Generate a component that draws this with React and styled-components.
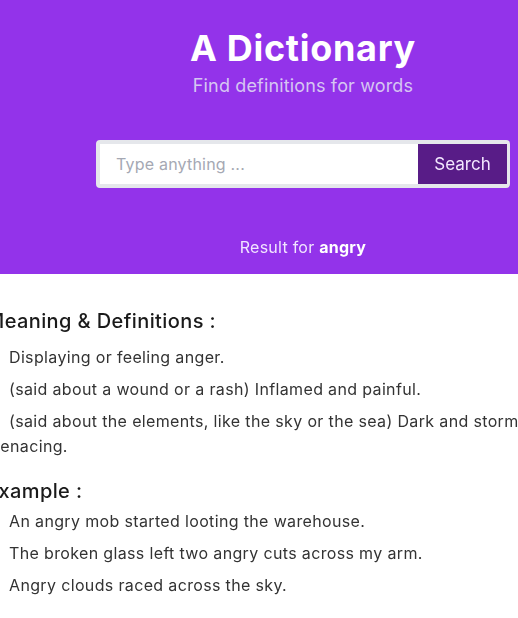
import React from 'react'
import styled, { createGlobalStyle } from 'styled-components'

const GlobalStyle = createGlobalStyle`
  body {
    margin: 0;
    overflow: hidden;
    font-family: "Inter", "Liberation Sans", sans-serif;
    background: #fff;
  }
`

const meanings = [
  'Displaying or feeling anger.',
  '(said about a wound or a rash) Inflamed and painful.',
  '(said about the elements, like the sky or the sea) Dark and stormy, menacing.',
]

const examples = [
  'An angry mob started looting the warehouse.',
  'The broken glass left two angry cuts across my arm.',
  'Angry clouds raced across the sky.',
]

function App() {
  return (
    <>
      <GlobalStyle />
      <Header>
        <Title>A Dictionary</Title>
        <Subtitle>Find definitions for words</Subtitle>
        <SearchForm onSubmit={(e) => e.preventDefault()}>
          <SearchInput placeholder="Type anything ..." autoFocus />
          <SearchButton type="submit">Search</SearchButton>
        </SearchForm>
        <ResultFor>
          Result for <b>angry</b>
        </ResultFor>
      </Header>
      <Results>
        <SectionTitle>Meaning &amp; Definitions :</SectionTitle>
        <List $top="9px">
          {meanings.map((m) => (
            <Item key={m}>{m}</Item>
          ))}
        </List>
        <SectionTitle $gap>Example :</SectionTitle>
        <List $top="3px">
          {examples.map((m) => (
            <Item key={m}>{m}</Item>
          ))}
        </List>
      </Results>
    </>
  )
}

export default App

const Header = styled.header`
  background-color: #9333ea;
  height: 274px;
  box-sizing: border-box;
  padding: 26px 0 0 88px;
  display: flex;
  flex-direction: column;
  align-items: center;
`

const Title = styled.h1`
  margin: 0;
  color: #fff;
  font-size: 36px;
  line-height: 44px;
  font-weight: 700;
  letter-spacing: 0.7px;
`

const Subtitle = styled.p`
  margin: 3px 0 0;
  color: #d6c6f2;
  font-size: 18px;
  line-height: 26px;
  letter-spacing: 0.15px;
`

const SearchForm = styled.form`
  margin-top: 41px;
  width: 414px;
  height: 48px;
  box-sizing: border-box;
  border: 4px solid #e5e7eb;
  border-right-width: 3px;
  border-radius: 4px;
  display: flex;
  background: #fff;
`

const SearchInput = styled.input`
  flex: 1;
  min-width: 0;
  border: none;
  outline: none;
  padding: 0 16px;
  font-family: inherit;
  font-size: 16px;
  letter-spacing: 0.2px;
  color: #333;
  caret-color: #111;
  &::placeholder {
    color: #a5a8b3;
  }
`

const SearchButton = styled.button`
  width: 89px;
  border: none;
  background-color: #581c87;
  color: #f3e8ff;
  font-family: inherit;
  font-size: 17px;
  padding: 0;
`

const ResultFor = styled.p`
  margin: 47px 0 0;
  color: #f1e4ff;
  font-size: 16px;
  line-height: 24px;
  letter-spacing: 0.25px;
  b {
    color: #fff;
    font-weight: 700;
  }
`

const Results = styled.main`
  margin-left: -14px;
  width: 560px;
  padding-top: 32px;
`

const SectionTitle = styled.h2`
  margin: ${(p) => (p.$gap ? '17px' : '0')} 0 0;
  color: #1a1a1a;
  font-size: 20px;
  line-height: 30px;
  font-weight: 500;
  letter-spacing: 0.4px;
`

const List = styled.ul`
  list-style: none;
  margin: ${(p) => p.$top} 0 0;
  padding: 0;
`

const Item = styled.li`
  color: #333;
  font-size: 16px;
  line-height: 25px;
  letter-spacing: 0.35px;
  text-indent: 23px;
  margin-bottom: 7px;
`
